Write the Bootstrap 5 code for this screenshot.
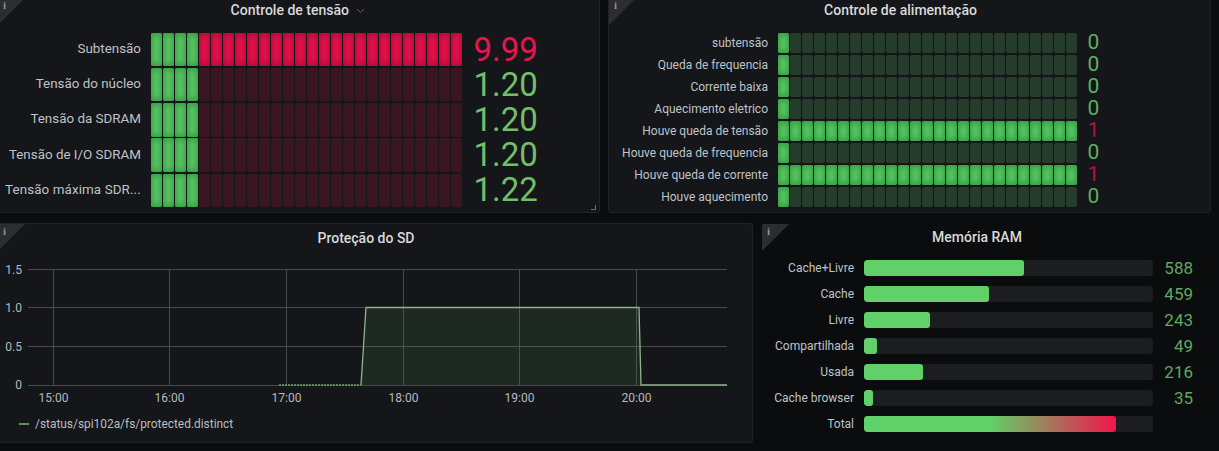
<!DOCTYPE html>
<html lang="pt">
<head>
<meta charset="utf-8">
<title>Painel</title>
<link href="https://cdn.jsdelivr.net/npm/bootstrap@5.3.0/dist/css/bootstrap.min.css" rel="stylesheet">
<style>
html,body{height:100%;overflow:hidden;background:#0b0c0e;font-family:Roboto,"Liberation Sans",sans-serif;color:#c0c4c9}
.dash{width:1225px;margin:-3px 0 0 -3px;gap:10px}
.tile{position:relative;background:#141619;border:1px solid #202226;border-radius:3px;overflow:hidden}
.tile-a{width:603px;height:216px}
.tile-b{width:603px;height:216px;margin-left:8px}
.tile-c{width:756px;height:220px}
.tile-d{width:460px;height:220px;background:#0b0c0e;border-color:transparent;margin-left:8px}
.corner{position:absolute;left:0;top:0;width:27px;height:27px;background:#2b2d31;clip-path:polygon(0 0,100% 0,0 100%)}
.corner span{position:absolute;left:5px;top:1px;font:700 11px/13px "Liberation Serif",serif;color:#8f9296}
.head{font-size:14px;font-weight:500;color:#d8d9da;line-height:18px;text-align:center}
.head-a{padding-top:3px;padding-right:1px;height:34px}
.head-b{padding-top:3px;padding-right:18px;height:34px}
.head-c{padding-top:5px;padding-right:18px;height:31px}
.head-d{padding-top:4px;padding-right:28px;height:31px}
.rows-a{padding-left:7px}
.row-a{height:35.2px}
.lab{text-align:right;color:#bfc3c8;white-space:nowrap}
.lab-a{width:136px;margin-right:10px;font-size:13.4px;padding-bottom:1px}
.cut{margin-right:6px;letter-spacing:.1px}
.leds{gap:1.5px}
.led{display:block;width:10.5px;height:100%;border-radius:2px}
.row-a .leds{height:33.4px}
.on-g{background:#62d06c;box-shadow:inset 0 0 6px 2px #339a40}
.on-r{background:#f5124e;box-shadow:inset 0 0 6px 2px #ad0a39}
.off-r{background:#3a1522}
.off-g{background:#263d2e}
.num-a{font-size:33px;line-height:35px;margin-left:12px;padding-bottom:1px;color:#73bf69}
.bad{color:#e8164d}
.row-b{height:22px}
.row-b .leds{height:20px}
.rows-b{padding-left:8px}
.lab-b{width:151px;margin-right:10px;font-size:12px;padding-bottom:1px}
.num-b{font-size:21px;line-height:22px;margin-left:11px;padding-bottom:2px;color:#5fae62}
.bad-b{color:#b8123f}
.plot{display:block}
.plot text{font:12px Roboto,sans-serif;fill:#b6babf}
.lgd{font-size:11.9px;color:#b9bdc2;line-height:16px;padding-left:21px;gap:6px}
.lgd i{display:block;width:10px;height:2px;background:#5c8f5c}
.rows-d{padding-left:8px}
.row-d{height:26px}
.lab-d{width:84px;margin-right:10px;font-size:12px}
.track{width:289px;height:16.5px;background:#1c1d20;border-radius:3px;overflow:hidden}
.fill{height:100%;background:#60d068;border-radius:3px}
.fill-t{background:linear-gradient(90deg,#60d068 0,#60d068 50%,#f2144d 100%)}
.num-d{width:40px;text-align:right;font-size:17px;line-height:20px;color:#5fa85f}
.grip{position:absolute;right:3px;bottom:2px;width:5px;height:5px;border-right:1px solid #6a6d72;border-bottom:1px solid #6a6d72}
</style>
</head>
<body>
<div class="dash d-flex flex-column">
  <div class="d-flex">
    <section class="tile tile-a">
      <div class="corner"><span>i</span></div>
      <div class="head head-a">Controle de tensão <svg width="9" height="6" viewBox="0 0 9 6" class="ms-1"><path d="M1 1l3.500 3.500L8 1" fill="none" stroke="#5d6066" stroke-width="1"/></svg></div>
      <div class="rows-a" id="ra"></div>
      <div class="grip"></div>
    </section>
    <section class="tile tile-b">
      <div class="corner"><span>i</span></div>
      <div class="head head-b">Controle de alimentação</div>
      <div class="rows-b" id="rb"></div>
    </section>
  </div>
  <div class="d-flex">
    <section class="tile tile-c">
      <div class="corner"><span>i</span></div>
      <div class="head head-c">Proteção do SD</div>
      <svg class="plot" width="753" height="153" viewBox="-2 255 753 153">
        <g stroke="#47494d" stroke-width="1">
          <path d="M28 269.500H727M28 307.500H727M28 346.500H727M28 385.500H727"/>
          <path d="M53.500 269V385M169.500 269V385M286.500 269V385M403.500 269V385M519.500 269V385M636.500 269V385"/>
        </g>
        <path d="M361 385L366 307.500H639L641 385Z" fill="#5a8a5a" fill-opacity=".17"/>
        <path d="M279 385H361" stroke="#6fa36c" stroke-width="1.500" stroke-dasharray="2 1" fill="none"/>
        <path d="M361 385L366 307.500H639L641 385H727" stroke="#8fb38b" stroke-width="1.300" fill="none"/>
        <g text-anchor="end">
          <text x="22" y="274">1.5</text><text x="22" y="312">1.0</text><text x="22" y="351">0.5</text><text x="22" y="389">0</text>
        </g>
        <g text-anchor="middle">
          <text x="53.500" y="402">15:00</text><text x="169.500" y="402">16:00</text><text x="286.500" y="402">17:00</text><text x="403.500" y="402">18:00</text><text x="519.500" y="402">19:00</text><text x="636.500" y="402">20:00</text>
        </g>
      </svg>
      <div class="lgd d-flex align-items-center mt-2">
        <i></i><span>/status/spi102a/fs/protected.distinct</span>
      </div>
    </section>
    <section class="tile tile-d">
      <div class="corner"><span>i</span></div>
      <div class="head head-d">Memória RAM</div>
      <div class="rows-d" id="rd"></div>
    </section>
  </div>
</div>
<script>
function leds(n,first,on,off){var s='';for(var i=0;i<n;i++){s+='<span class="led '+(i<first?'on-g':(on||off))+'"></span>';}return s;}
var a=[['Subtensão','9.99',1],['Tensão do núcleo','1.20'],['Tensão da SDRAM','1.20'],['Tensão de I/O SDRAM','1.20'],['<span class="cut">Tensão máxima SDR...</span>','1.22']];
document.getElementById('ra').innerHTML=a.map(function(r){
  return '<div class="row-a d-flex align-items-center"><div class="lab lab-a">'+r[0]+'</div><div class="leds d-flex">'+leds(26,4,r[2]?'on-r':'off-r')+'</div><div class="num-a'+(r[2]?' bad':'')+'">'+r[1]+'</div></div>';
}).join('');
var b=[['subtensão',0],['Queda de frequencia',0],['Corrente baixa',0],['Aquecimento eletrico',0],['Houve queda de tensão',1],['Houve queda de frequencia',0],['Houve queda de corrente',1],['Houve aquecimento',0]];
document.getElementById('rb').innerHTML=b.map(function(r){
  return '<div class="row-b d-flex align-items-center"><div class="lab lab-b">'+r[0]+'</div><div class="leds d-flex">'+leds(25,r[1]?25:1,'off-g')+'</div><div class="num-b'+(r[1]?' bad-b':'')+'">'+r[1]+'</div></div>';
}).join('');
var d=[['Cache+Livre',160,'588'],['Cache',125,'459'],['Livre',66,'243'],['Compartilhada',13,'49'],['Usada',59,'216'],['Cache browser',9,'35'],['Total',252,'']];
document.getElementById('rd').innerHTML=d.map(function(r){
  return '<div class="row-d d-flex align-items-center"><div class="lab lab-d">'+r[0]+'</div><div class="track"><div class="fill'+(r[2]?'':' fill-t')+'" style="width:'+r[1]+'px"></div></div><div class="num-d">'+r[2]+'</div></div>';
}).join('');
</script>
<script src="https://cdn.jsdelivr.net/npm/bootstrap@5.3.0/dist/js/bootstrap.bundle.min.js"></script>
</body>
</html>
